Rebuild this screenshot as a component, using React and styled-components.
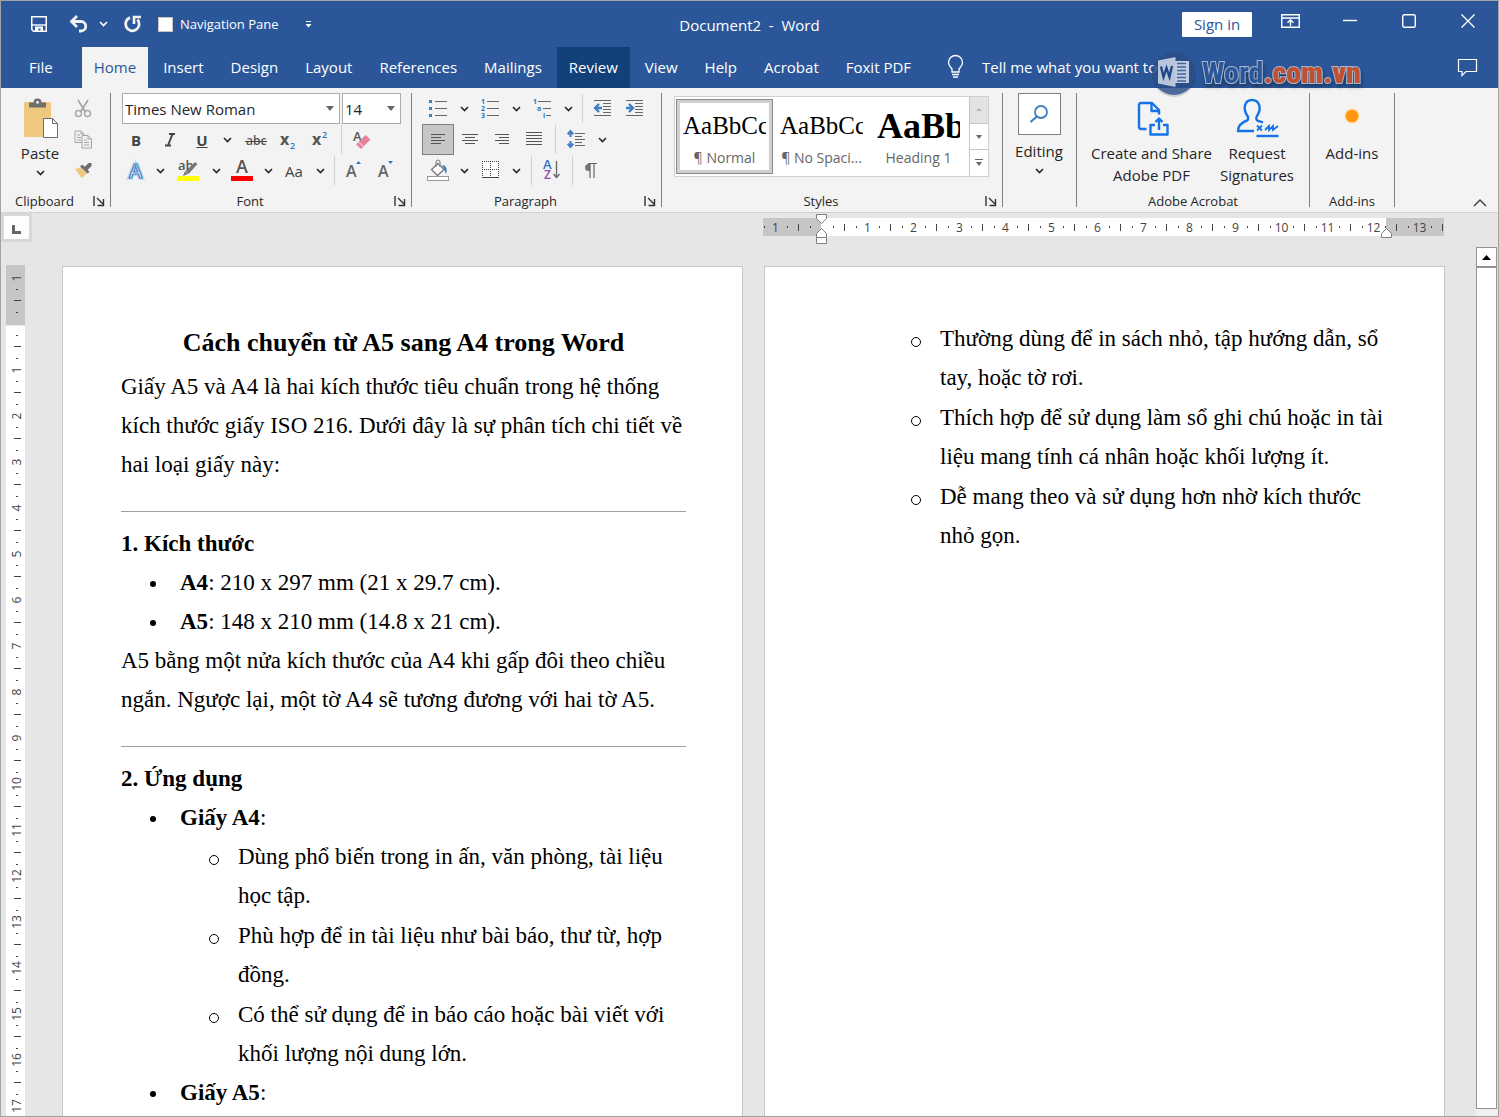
import React, { useState } from 'react';
import styled, { createGlobalStyle, css } from 'styled-components';

const GlobalStyle = createGlobalStyle`
  * {
    box-sizing: border-box;
  }

  body {
    margin: 0;
    background: #e6e6e6;
    color: #262626;
    font-family: 'Open Sans', 'Noto Sans', sans-serif;
    font-size: 15px;
  }

  button, input, select {
    margin: 0;
    padding: 0;
    border: 0;
    border-radius: 0;
    background: transparent;
    color: inherit;
    font: inherit;
  }

  svg {
    display: block;
    flex: none;
    overflow: visible;
  }
`;

/* ---------- window ---------- */

const Window = styled.div`
  position: relative;
  display: flex;
  flex-direction: column;
  height: 100vh;
  overflow: hidden;
  border: 1px solid #a3a3a3;
`;

const TitleBar = styled.header`
  display: grid;
  grid-template-columns: 1fr auto 1fr;
  align-items: center;
  height: 46px;
  background: #2b579a;
  color: #fff;
`;

const QuickAccess = styled.div`
  display: flex;
  align-items: center;
  gap: 10px;
  padding-left: 28px;
`;

const SplitButton = styled.div`
  display: flex;
`;

const BarButton = styled.button`
  display: flex;
  align-items: center;
  justify-content: center;
  width: ${props => props.$width || 20}px;
  height: 28px;
`;

const CheckLabel = styled.label`
  display: flex;
  align-items: center;
  gap: 7px;
  font-size: 13px;
  margin-right: 10px;
`;

const CheckBox = styled.input`
  appearance: none;
  width: 15px;
  height: 15px;
  border: 1px solid #c8c6c4;
  background: #fff;

  &:checked {
    box-shadow: inset 0 0 0 3px #fff;
    background: #2b579a;
  }
`;

const DocumentTitle = styled.h1`
  margin: 0;
  padding-top: 2px;
  font-size: 15px;
  font-weight: 400;
  white-space: pre;
`;

const WindowControls = styled.div`
  display: flex;
  align-items: center;
  justify-content: flex-end;
`;

const SignIn = styled.button`
  width: 70px;
  height: 25px;
  margin-right: 8px;
  border-radius: 1px;
  background: #fff;
  color: #2b579a;
`;

/* ---------- tabs ---------- */

const TabBar = styled.nav`
  display: flex;
  flex: none;
  align-items: stretch;
  gap: 3px;
  height: 41px;
  padding-left: 16px;
  background: #2b579a;
  color: #fff;
`;

const Tab = styled.button`
  padding: 0 12px 2px;
  white-space: nowrap;

  &:first-child {
    margin-right: 14px;
  }

  ${props =>
    props.$hovered &&
    css`
      background: #124078;
    `}

  ${props =>
    props.$active &&
    css`
      background: #f3f3f3;
      color: #2b579a;
    `}
`;

const TellMe = styled.label`
  display: flex;
  align-items: center;
  gap: 18px;
  margin-left: 21px;
  padding-bottom: 2px;
`;

const TellMeInput = styled.input`
  width: 204px;
  outline: none;

  &::placeholder {
    color: #fff;
    opacity: 1;
  }
`;

const CommentButton = styled(BarButton)`
  align-self: center;
  margin-left: auto;
  margin-right: 21px;
`;

/* ---------- watermark over the tab bar ---------- */

const Watermark = styled.div`
  position: absolute;
  top: 47px;
  right: 137px;
  display: flex;
  align-items: center;
  gap: 4px;
  pointer-events: none;
`;

const WatermarkText = styled.span`
  font-family: 'Liberation Sans Narrow', 'Roboto Condensed', 'Liberation Sans', sans-serif;
  font-size: 30px;
  font-weight: 700;
  line-height: 48px;
  color: #2b579a;
  -webkit-text-stroke: 2px #a9b8d2;
  paint-order: stroke fill;
  filter: drop-shadow(1px 3px 2px rgba(0, 0, 0, 0.35));

  b {
    color: #c0502f;
  }
`;

/* ---------- ribbon ---------- */

const Ribbon = styled.div`
  display: flex;
  flex: none;
  height: 125px;
  padding: 5px 0;
  border-bottom: 1px solid #d2d2d2;
  background: #f3f3f3;
`;

const Group = styled.section`
  display: flex;
  flex: none;
  flex-direction: column;
  width: ${props => props.$width}px;
  border-right: 1px solid #808080;
`;

const GroupBody = styled.div`
  display: flex;
  flex: 1;
  align-items: flex-start;
  padding-left: ${props => props.$indent || 0}px;
`;

const GroupFooter = styled.div`
  display: flex;
  align-items: center;
  height: 18px;
  margin-bottom: -3px;
  font-size: 13px;
`;

const GroupName = styled.span`
  flex: 1;
  text-align: center;
`;

const Launcher = styled.button`
  display: flex;
  justify-content: center;
  width: 22px;
`;

const Rows = styled.div`
  display: flex;
  flex-direction: column;
`;

const Row = styled.div`
  display: flex;
  align-items: center;
  height: 31px;
`;

const Tool = styled.button`
  display: flex;
  align-items: center;
  justify-content: center;
  width: ${props => props.$width || 32}px;
  height: 31px;
  color: #444;

  ${props =>
    props.$pressed &&
    css`
      border: 1px solid #808080;
      background: #c6c6c6;
    `}
`;

const Divider = styled.span`
  display: flex;
  justify-content: center;
  width: ${props => (props.$narrow ? 8 : 10)}px;

  &::before {
    content: '';
    width: 1px;
    height: 29px;
    background: #d0d0d0;
  }
`;

const BigButton = styled.button`
  display: flex;
  flex-direction: column;
  align-items: center;
  width: ${props => props.$width}px;
  padding-top: 5px;
  line-height: 22px;
`;

const EditingButton = styled(BigButton)`
  padding-top: 0;
`;

const BigIcon = styled.span`
  display: flex;
  align-items: center;
  justify-content: center;
  height: ${props => props.$height || 44}px;
  padding-bottom: ${props => props.$raise || 0}px;
`;

const EditingBox = styled.span`
  display: flex;
  align-items: center;
  justify-content: center;
  width: 43px;
  height: 42px;
  margin-bottom: 5px;
  border: 1px solid #808080;
  background: #fff;
`;

const SelectBox = styled.div`
  position: relative;
  width: ${props => props.$width}px;
  height: 31px;
  margin-right: 2px;
  border: 1px solid #ababab;
  background: #fff;

  svg {
    position: absolute;
    top: 12px;
    right: 5px;
    pointer-events: none;
  }
`;

const Select = styled.select`
  appearance: none;
  width: 100%;
  height: 100%;
  padding-left: 2px;
  outline: none;
`;

const Gallery = styled.div`
  display: flex;
  width: 315px;
  height: 81px;
  margin-top: 3px;
  border: 1px solid #d0d0d0;
  background: #fff;
`;

const StyleCard = styled.button`
  display: flex;
  flex-direction: column;
  width: 97px;
  height: 75px;
  margin: 2px 0 0 1px;
  padding: 9px 3px 0;
  border: 4px solid transparent;
  color: #666;
  font-size: 14px;
  line-height: 20px;

  & + & {
    margin-left: 0;
  }

  ${props =>
    props.$active &&
    css`
      border-color: #d0d0ce;
      outline: 1px solid #8a8a88;
      outline-offset: -1px;
    `}
`;

const Sample = styled.span`
  width: 100%;
  height: 36px;
  overflow: hidden;
  color: #000;
  font-family: 'Liberation Serif', 'Times New Roman', serif;
  font-size: ${props => (props.$heading ? 36 : 25)}px;
  font-weight: ${props => (props.$heading ? 700 : 400)};
  line-height: 28px;
  text-align: left;
  white-space: nowrap;
`;

const StyleName = styled.span`
  width: 100%;
  text-align: center;
  white-space: nowrap;
`;

const GalleryScroll = styled.div`
  display: flex;
  flex-direction: column;
  width: 19px;
  margin-left: auto;
  border-left: 1px solid #c6c6c6;

  button {
    display: flex;
    flex: 1;
    align-items: center;
    justify-content: center;
  }

  button + button {
    border-top: 1px solid #c6c6c6;
  }

  button:disabled {
    background: #e3e3e3;
  }
`;

const Collapse = styled.button`
  align-self: flex-end;
  margin: 0 11px 0 auto;
`;

/* ---------- work area ---------- */

const Workspace = styled.main`
  display: grid;
  flex: 1;
  grid-template-columns: 31px 1fr 23px;
  grid-template-rows: 52px 1fr;
  min-height: 0;
  background: #e6e6e6;
`;

const Corner = styled.button`
  display: flex;
  align-items: center;
  justify-content: center;
  width: 31px;
  height: 29px;
  border: 3px solid #d8d8d8;
  background: #fdfdfd;
`;

const RulerStrip = styled.div`
  display: flex;
  justify-content: center;
  padding-left: 700px;
`;

const Ruler = styled.div`
  position: relative;
  display: flex;
  flex: none;
  justify-content: space-between;
  width: 681px;
  height: 18px;
  margin-top: 5px;
  padding: 0 1px;
  background: linear-gradient(
    to right,
    #c6c6c6 58px,
    #fff 58px calc(100% - 58px),
    #c6c6c6 calc(100% - 58px)
  );
`;

const Mark = styled.span`
  display: flex;
  align-items: center;
  justify-content: center;
  width: 0;
  color: #444;
  font-size: 12px;
  white-space: nowrap;

  i {
    flex: none;
    width: ${props => (props.$side ? props.$size : 1)}px;
    height: ${props => (props.$side ? 1 : props.$size)}px;
    background: #444;
  }
`;

const Indent = styled.span`
  position: absolute;
  top: ${props => props.$top}px;
  left: ${props => props.$left};
`;

const VerticalRuler = styled.div`
  width: 19px;
  margin-left: 5px;
  padding-top: 7px;
  overflow: hidden;
  background: linear-gradient(to bottom, #c6c6c6 60px, #e6e6e6 60px 61px, #fff 61px);
`;

const Centimetre = styled.div`
  display: grid;
  grid-template-rows: repeat(4, minmax(0, 1fr));
  justify-items: center;
  height: 46px;
  padding-left: 3px;
`;

const SideMark = styled(Mark)`
  line-height: 0;

  span {
    transform: rotate(-90deg);
  }
`;

const Pages = styled.div`
  display: flex;
  justify-content: center;
  gap: 21px;
  padding-top: 1px;
  overflow: hidden;
`;

const Page = styled.article`
  flex: none;
  width: 681px;
  min-height: 965px;
  padding: 52px 56px 52px 58px;
  border: 1px solid #c6c6c6;
  background: #fff;
  color: #000;
  font-family: 'Liberation Serif', 'Times New Roman', serif;
  font-size: 23px;
  line-height: 39px;

  p {
    margin: 0;
  }
`;

const Heading = styled.h2`
  margin: 0;
  font-size: 26px;
  line-height: 48px;
  text-align: center;
`;

const SubHeading = styled.h3`
  margin: 0;
  font-size: 23px;
`;

const Rule = styled.hr`
  height: 1px;
  margin: 27px 0 12px;
  border: 0;
  background: #a0a0a0;
`;

const List = styled.ul`
  margin: 0;
  padding: 0 0 0 29px;
  list-style: none;
`;

const Item = styled.li`
  display: grid;
  grid-template-columns: 30px 1fr;

  &::before {
    content: '';
    width: 6px;
    height: 6px;
    margin-top: 18px;
    border-radius: 50%;
    background: #000;
  }
`;

const SubItem = styled(Item)`
  grid-template-columns: 29px 1fr;

  & + & {
    margin-top: 1px;
  }

  &::before {
    width: 8px;
    height: 8px;
    border: 1px solid #000;
    background: none;
  }
`;

const SecondPageList = styled(List)`
  margin-left: 59px;
`;

const ScrollBar = styled.div`
  display: flex;
  grid-column: 3;
  grid-row: 1 / 3;
  flex-direction: column;
  margin: 34px 1px 0;
  background: #f0f0f0;
`;

const ScrollButton = styled.button`
  display: flex;
  align-items: center;
  justify-content: center;
  height: 20px;
  border: 1px solid #939393;
  background: #fff;
`;

const Thumb = styled.div`
  flex: 1;
  margin-bottom: 7px;
  border: 1px solid #939393;
  background: #fff;
`;

/* ---------- icons ---------- */

const Svg = ({ w, h, children, ...rest }) => (
  <svg width={w} height={h} viewBox={`0 0 ${w} ${h}`} fill="none" aria-hidden="true" {...rest}>
    {children}
  </svg>
);

const ChevronIcon = ({ color = '#262626' }) => (
  <Svg w={9} h={6}>
    <path d="M1 1l3.5 3.5L8 1" stroke={color} strokeWidth="1.6" />
  </Svg>
);

const TriangleIcon = ({ up, color = '#666', w = 7, h = 4 }) => (
  <Svg w={w} h={h}>
    <path d={up ? `M0 ${h}h${w}L${w / 2} 0z` : `M0 0h${w}L${w / 2} ${h}z`} fill={color} />
  </Svg>
);

const LauncherIcon = () => (
  <Svg w={12} h={11}>
    <path d="M1 0v10M4 2l6 6M10.5 3v6.500h-6" stroke="#333" strokeWidth="1.4" />
  </Svg>
);

const SaveIcon = () => (
  <Svg w={16} h={16}>
    <path d="M.75.75h14.5v14.5H2.500L.75 13.500z" stroke="#fff" strokeWidth="1.5" />
    <path d="M1 9h14" stroke="#fff" strokeWidth="1.4" />
    <path d="M4 10.500h8v5H9.500v-3H7.500v3H4z" fill="#fff" />
  </Svg>
);

const UndoIcon = () => (
  <Svg w={20} h={18}>
    <path d="M3 6.500h9a4.700 4.700 0 0 1 0 9.500h-2" stroke="#f3f3f3" strokeWidth="2.8" />
    <path d="M8 1L2.500 6.500L8 12" stroke="#f3f3f3" strokeWidth="2.8" />
  </Svg>
);

const RedoIcon = () => (
  <Svg w={18} h={18}>
    <path d="M6 2.600A6.800 6.800 0 1 0 13.500 4.500" stroke="#f3f3f3" strokeWidth="2.8" />
    <path d="M10 9V2h7" stroke="#f3f3f3" strokeWidth="2.6" />
  </Svg>
);

const CustomizeIcon = () => (
  <Svg w={7} h={7}>
    <path d="M1 .5h5" stroke="#fff" />
    <path d="M.5 3h6l-3 3.500z" fill="#fff" />
  </Svg>
);

const RibbonDisplayIcon = () => (
  <Svg w={19} h={20}>
    <path d="M.75.75h17.500v12.500H.75zM1 4h17" stroke="#fff" strokeWidth="1.4" />
    <path d="M9.500 12V6M6.500 8.800l3-3 3 3" stroke="#fff" strokeWidth="1.4" />
  </Svg>
);

const MinimizeIcon = () => (
  <Svg w={14} h={14}>
    <path d="M0 3.500h14" stroke="#fff" strokeWidth="1.4" />
  </Svg>
);

const MaximizeIcon = () => (
  <Svg w={14} h={20}>
    <rect x=".75" y=".75" width="12.500" height="12.500" rx="1.500" stroke="#fff" strokeWidth="1.4" />
  </Svg>
);

const CloseIcon = () => (
  <Svg w={14} h={20}>
    <path d="M.5.5l13 13M13.500.5l-13 13" stroke="#fff" strokeWidth="1.4" />
  </Svg>
);

const BulbIcon = () => (
  <Svg w={17} h={24}>
    <path
      d="M5 17v-3C3.500 12 1.500 10.500 1.500 7.500a7 7 0 0 1 14 0c0 3-2 4.500-3.500 6.500v3zM5 19.500h7M6 22h5"
      stroke="#fff"
      strokeWidth="1.3"
    />
  </Svg>
);

const CommentIcon = () => (
  <Svg w={19} h={17}>
    <path d="M.5.5h18v12H8l-4 4v-4H.5z" stroke="#fff" strokeWidth="1.2" />
  </Svg>
);

const WatermarkIcon = () => (
  <Svg w={48} h={50}>
    <ellipse cx="24" cy="27" rx="22" ry="22" fill="#000" opacity=".14" />
    <circle cx="24" cy="25" r="22" fill="#2b4f8c" opacity=".8" />
    <path d="M25 13h14v22H25z" fill="#dbe2ee" opacity=".85" />
    <path d="M27 15.500h9M27 19h9M27 22.500h9M27 26h9M27 29.500h9M27 33h9" stroke="#41639e" strokeWidth="1.5" />
    <path d="M8 12.500L25.500 9v30L8 35.500z" fill="#b9c5da" />
    <path d="M11 18.500l2.500 10.500 3-9 3 9 2.500-11" stroke="#1f4485" strokeWidth="2.3" />
  </Svg>
);

const PasteIcon = () => (
  <Svg w={32} h={40}>
    <rect x="0" y="3" width="27" height="35" rx="1" fill="#edc87e" />
    <path d="M5 3.500h4.500a4 4 0 0 1 8 0H22v5H5z" fill="#6e6e6e" />
    <circle cx="13.500" cy="3.300" r="1.400" fill="#f3f3f3" />
    <path d="M19.500 19.500h9l5 5V38.500h-14z" fill="#fff" stroke="#6e6e6e" />
    <path d="M28.500 19.500v5h5" stroke="#6e6e6e" />
  </Svg>
);

const CutIcon = () => (
  <Svg w={18} h={19}>
    <path d="M4 1l7.500 12M14 1L6.500 13" stroke="#a6a6a6" strokeWidth="1.8" />
    <circle cx="4.500" cy="14.500" r="3" stroke="#a6a6a6" strokeWidth="1.4" />
    <circle cx="13.500" cy="14.500" r="3" stroke="#a6a6a6" strokeWidth="1.4" />
  </Svg>
);

const CopyIcon = () => (
  <Svg w={18} h={19}>
    <path d="M1 1h6l3 3v8.500H1zM7 1v3h3M3 5h3M3 7.500h4M3 10h4" stroke="#a6a6a6" />
    <path d="M8 5.500h6l3.500 3.500v9H8z" fill="#f3f3f3" stroke="#a6a6a6" />
    <path d="M14 5.500V9h3.500M10 10h3M10 12.500h5.500M10 15h5.500" stroke="#a6a6a6" />
  </Svg>
);

const PainterIcon = () => (
  <Svg w={18} h={17}>
    <path d="M1 7l5.500-1.500 6.500 6L7.500 16z" fill="#edc87e" />
    <path d="M6 4.500l2.500-2 7 7.500-2 1.500z" fill="#6e6e6e" />
    <path d="M9.500 6L14.500 1h3v3L12.500 9z" fill="#6e6e6e" />
  </Svg>
);

const iconText = {
  fontFamily: "'Open Sans', sans-serif",
  fontWeight: 600
};

const SubscriptIcon = ({ sup }) => (
  <Svg w={18} h={20}>
    <text x="1" y="15" fontSize="16" fill="#555" {...iconText} fontWeight="700">x</text>
    <text x="11" y={sup ? 8 : 19} fontSize="9" fill="#2e75c0" {...iconText}>2</text>
  </Svg>
);

const EraserIcon = () => (
  <Svg w={20} h={20}>
    <text x="1" y="11" fontSize="13" fill="#555" {...iconText}>A</text>
    <path d="M4 14.500L13.500 5l5 4.500L9 19z" fill="#e8829a" />
    <path d="M6.500 12l5 4.500" stroke="#f3f3f3" />
  </Svg>
);

const EffectsIcon = () => (
  <Svg w={20} h={22}>
    <text
      x="3" y="18" fontSize="20" fill="#fff" stroke="#9cc3ec" strokeWidth="4" opacity=".5" {...iconText}
    >A</text>
    <text x="3" y="18" fontSize="20" fill="#fff" stroke="#3f7ec4" strokeWidth="1.2" {...iconText}>A</text>
  </Svg>
);

const HighlightIcon = () => (
  <Svg w={24} h={24}>
    <text x="2" y="11" fontSize="13" fill="#555" {...iconText}>ab</text>
    <path d="M19 3l2.500 2-9 10-3-3z" fill="#777" />
    <path d="M9 12l3 3-5 2z" fill="#777" />
    <path d="M1 17h22v5H1z" fill="#ff0" />
  </Svg>
);

const FontColorIcon = () => (
  <Svg w={24} h={24}>
    <text x="6" y="14" fontSize="18" fill="#555" {...iconText}>A</text>
    <path d="M1 17h22v5H1z" fill="#f00" />
  </Svg>
);

const SizeIcon = ({ up }) => (
  <Svg w={18} h={20}>
    <text x="1" y="16" fontSize="16" fill="#666" {...iconText}>A</text>
    <path d={up ? 'M11 3h5l-2.500-3z' : 'M11 0h5l-2.500 3z'} fill="#2e75c0" />
  </Svg>
);

const BulletsIcon = () => (
  <Svg w={20} h={18}>
    <path d="M7 1.500h12M7 8.500h12M7 15.500h12" stroke="#666" />
    <path d="M1 0h3v3H1zM1 7h3v3H1zM1 14h3v3H1z" fill="#3f7ebf" />
  </Svg>
);

const NumberingIcon = () => (
  <Svg w={20} h={20}>
    <path d="M7 2.500h12M7 9.500h12M7 16.500h12" stroke="#666" />
    <g fontSize="7" fill="#2e75c0" {...iconText} fontWeight="700">
      <text x="1" y="5">1</text>
      <text x="1" y="12">2</text>
      <text x="1" y="19">3</text>
    </g>
  </Svg>
);

const MultilevelIcon = () => (
  <Svg w={20} h={20}>
    <path d="M6 2.500h13M11 9.500h8M14 16.500h5" stroke="#666" />
    <g fontSize="7" fill="#2e75c0" {...iconText} fontWeight="700">
      <text x="1" y="5">1</text>
      <text x="5" y="12">a</text>
      <text x="11" y="19">i</text>
    </g>
  </Svg>
);

const IndentIcon = ({ increase }) => (
  <Svg w={19} h={17}>
    <path d="M1 .5h17M10 3.500h8M10 6.500h8M10 9.500h8M10 12.500h8M1 15.500h17" stroke="#666" />
    <path
      d={increase ? 'M1 8h6M4 4L8 8 4 12' : 'M9 8H3M6 4L2 8l4 4'}
      stroke="#3f7ebf"
      strokeWidth="2.4"
    />
  </Svg>
);

const alignPaths = {
  left: 'M1 .5h14M1 3.500h10M1 6.500h14M1 9.500h10',
  center: 'M0 .5h16M3 3.500h10M0 6.500h16M3 9.500h10',
  right: 'M1 .5h14M5 3.500h10M1 6.500h14M5 9.500h10',
  justify: 'M0 .5h16M0 3.500h16M0 6.500h16M0 9.500h16M0 12.500h16'
};

const AlignIcon = ({ kind }) => (
  <Svg w={16} h={kind === 'justify' ? 15 : 11}>
    <path d={alignPaths[kind]} stroke="#555" />
  </Svg>
);

const LineSpacingIcon = () => (
  <Svg w={18} h={21}>
    <path d="M8 4.500h10M8 7.500h7M8 10.500h10M8 13.500h7M8 16.500h10" stroke="#666" />
    <path d="M3.500 2v6M3.500 12v6M.7 5.200l2.800-3 2.800 3M.7 14.800l2.800 3 2.800-3" stroke="#4a80c8" strokeWidth="2.2" />
  </Svg>
);

const ShadingIcon = () => (
  <Svg w={23} h={23}>
    <path d="M11 4.500l6 6-6.500 6-6-6z" fill="#fff" stroke="#777" strokeWidth="1.3" />
    <path d="M9 8V3a2 2 0 0 1 4 0v5" stroke="#777" />
    <path d="M15 6c4 0 6 4 4 9l-2-5z" fill="#3f7ebf" />
    <rect x=".5" y="17.500" width="21" height="4" fill="#fff" stroke="#999" />
  </Svg>
);

const BordersIcon = () => (
  <Svg w={17} h={19}>
    <rect width="17" height="17" fill="#fff" />
    <path d="M0 .5h17M.5 0v17M16.500 0v17M8.500 0v17M0 8.500h17" stroke="#444" strokeDasharray="1 1" />
    <path d="M0 16.500h17" stroke="#444" />
  </Svg>
);

const SortIcon = () => (
  <Svg w={18} h={22}>
    <text x="0" y="9" fontSize="13" fill="#2e75c0" {...iconText}>A</text>
    <text x="1" y="19" fontSize="12" fill="#8e4fb0" {...iconText}>Z</text>
    <path d="M13.500 1v16M10.500 14l3 3.500 3-3.500" stroke="#666" strokeWidth="1.3" />
  </Svg>
);

const PilcrowIcon = () => (
  <Svg w={14} h={16}>
    <path d="M5 1H3.500a3.500 3.500 0 0 0 0 7H5z" fill="#777" />
    <path d="M3 .5h9M5 1v14M9 1v14" stroke="#666" strokeWidth="1.2" />
  </Svg>
);

const SearchIcon = () => (
  <Svg w={20} h={20}>
    <circle cx="12" cy="8" r="6" stroke="#3f7ebf" strokeWidth="1.8" />
    <path d="M8 12.500L1.500 18" stroke="#3f7ebf" strokeWidth="2.2" />
  </Svg>
);

const SharePdfIcon = () => (
  <Svg w={30} h={36}>
    <g stroke="#1473e6" strokeWidth="2.4" strokeLinejoin="round">
      <path d="M9.500 28H4a2 2 0 0 1-2-2V4a2 2 0 0 1 2-2h11l7 7v4.500" />
      <path d="M14.500 2v8H22" />
      <path d="M18 24h-4.500v9.500h17V24H26" />
      <path d="M22 29V18M18.500 21l3.500-3.500 3.500 3.500" />
    </g>
  </Svg>
);

const SignatureIcon = () => (
  <Svg w={42} h={40}>
    <g stroke="#1473e6" strokeWidth="2.4">
      <path d="M18 33H2c0-6 3.500-8.500 9-10.500 1.500-.6 1.500-3 .5-4.500C6.500 10.500 8.500 2 16 2s10 8.500 5 16c-1.200 2-1 4 1 4.800l5 1.500" />
      <path d="M20.500 38h22" />
    </g>
    <path d="M21 27.500l5 5M26 27.500l-5 5" stroke="#1473e6" strokeWidth="1.8" />
    <path d="M29 32l4-4v4l4-4v4l5-4" stroke="#1473e6" strokeWidth="1.8" />
  </Svg>
);

const AddInsIcon = () => (
  <Svg w={16} h={16}>
    <circle cx="8" cy="8" r="7.500" fill="#ffd9a0" />
    <circle cx="8" cy="8" r="6.300" fill="#ff9810" />
  </Svg>
);

const CollapseIcon = () => (
  <Svg w={14} h={9}>
    <path d="M1 8l6-6 6 6" stroke="#444" strokeWidth="1.5" />
  </Svg>
);

const FirstLineMarker = () => (
  <Svg w={11} h={10}>
    <path d="M.5.5h10v4l-5 5-5-5z" fill="#fff" stroke="#808080" />
  </Svg>
);

const HangingMarker = ({ box }) => (
  <Svg w={11} h={box ? 16 : 10}>
    <path d="M.5 9.500h10v-4l-5-5-5 5z" fill="#fff" stroke="#808080" />
    {box && <path d="M.5 9.500h10v6H.5z" fill="#fff" stroke="#808080" />}
  </Svg>
);

/* ---------- parts ---------- */

const tabs = [
  'File', 'Home', 'Insert', 'Design', 'Layout', 'References',
  'Mailings', 'Review', 'View', 'Help', 'Acrobat', 'Foxit PDF'
];

const Chevron = ({ label, wide }) => (
  <Tool $width={wide ? 26 : 20} aria-label={`${label} options`}>
    <ChevronIcon />
  </Tool>
);

const RibbonGroup = ({ name, width, indent, launcher, children }) => (
  <Group $width={width} aria-label={name}>
    <GroupBody $indent={indent}>{children}</GroupBody>
    <GroupFooter>
      <GroupName>{name}</GroupName>
      {launcher && (
        <Launcher aria-label={`${name} settings`}>
          <LauncherIcon />
        </Launcher>
      )}
    </GroupFooter>
  </Group>
);

// one step is a quarter of a centimetre
const markAt = step => {
  const value = Math.abs(step);
  if (value === 0) return null;
  if (value % 4 === 0) return <span>{value / 4}</span>;
  return <i />;
};

const markSize = step => (step % 2 === 0 ? 7 : 2);

const HorizontalRuler = () => (
  <Ruler>
    {Array.from({ length: 60 }, (_, i) => i - 5).map(step => (
      <Mark key={step} $size={markSize(step)}>
        {markAt(step)}
      </Mark>
    ))}
    <Indent $top={-4} $left="53px">
      <FirstLineMarker />
    </Indent>
    <Indent $top={10} $left="53px">
      <HangingMarker box />
    </Indent>
    <Indent $top={10} $left="618px">
      <HangingMarker />
    </Indent>
  </Ruler>
);

const SideRuler = () => (
  <VerticalRuler>
    {Array.from({ length: 24 }, (_, i) => i - 1).map(cm => (
      <Centimetre key={cm}>
        {[0, 1, 2, 3].map(quarter => {
          const step = cm * 4 + quarter;
          return (
            <SideMark key={quarter} $side $size={markSize(step)}>
              {markAt(step)}
            </SideMark>
          );
        })}
      </Centimetre>
    ))}
  </VerticalRuler>
);

const FontGroup = () => {
  const [font, setFont] = useState('Times New Roman');
  const [size, setSize] = useState('14');

  return (
    <RibbonGroup name="Font" width={301} indent={11} launcher>
      <Rows>
        <Row>
          <SelectBox $width={218}>
            <Select aria-label="Font" value={font} onChange={e => setFont(e.target.value)}>
              <option>Times New Roman</option>
              <option>Arial</option>
            </Select>
            <TriangleIcon w={8} h={5} />
          </SelectBox>
          <SelectBox $width={59}>
            <Select aria-label="Font size" value={size} onChange={e => setSize(e.target.value)}>
              <option>14</option>
              <option>16</option>
            </Select>
            <TriangleIcon w={8} h={5} />
          </SelectBox>
        </Row>
        <Row>
          <Tool $width={28} aria-label="Bold"><b>B</b></Tool>
          <Tool $width={40} aria-label="Italic">
            <Svg w={12} h={14}>
              <path d="M5 1h6M1 12.500h6M8.500 1L4 12.500" stroke="#444" strokeWidth="2" />
            </Svg>
          </Tool>
          <Tool $width={24} aria-label="Underline"><b><u>U</u></b></Tool>
          <Chevron label="Underline" wide />
          <Tool aria-label="Strikethrough">
            <Svg w={22} h={16}>
              <text x="1" y="13" fontSize="12" fill="#555" {...iconText}>abc</text>
              <path d="M0 9.500h22" stroke="#444" />
            </Svg>
          </Tool>
          <Tool aria-label="Subscript"><SubscriptIcon /></Tool>
          <Tool aria-label="Superscript"><SubscriptIcon sup /></Tool>
          <Divider />
          <Tool aria-label="Clear formatting"><EraserIcon /></Tool>
        </Row>
        <Row>
          <Tool $width={28} aria-label="Text effects"><EffectsIcon /></Tool>
          <Chevron label="Text effects" />
          <Tool $width={36} aria-label="Highlight colour"><HighlightIcon /></Tool>
          <Chevron label="Highlight colour" />
          <Tool aria-label="Font colour"><FontColorIcon /></Tool>
          <Chevron label="Font colour" />
          <Tool aria-label="Change case">Aa</Tool>
          <Chevron label="Change case" />
          <Divider $narrow />
          <Tool aria-label="Increase font size"><SizeIcon up /></Tool>
          <Tool aria-label="Decrease font size"><SizeIcon /></Tool>
        </Row>
      </Rows>
    </RibbonGroup>
  );
};

const ParagraphGroup = () => (
  <RibbonGroup name="Paragraph" width={250} indent={10} launcher>
    <Rows>
      <Row>
        <Tool aria-label="Bullets"><BulletsIcon /></Tool>
        <Chevron label="Bullets" />
        <Tool aria-label="Numbering"><NumberingIcon /></Tool>
        <Chevron label="Numbering" />
        <Tool aria-label="Multilevel list"><MultilevelIcon /></Tool>
        <Chevron label="Multilevel list" />
        <Divider $narrow />
        <Tool aria-label="Decrease indent"><IndentIcon /></Tool>
        <Tool aria-label="Increase indent"><IndentIcon increase /></Tool>
      </Row>
      <Row>
        <Tool aria-label="Align left" $pressed><AlignIcon kind="left" /></Tool>
        <Tool aria-label="Centre"><AlignIcon kind="center" /></Tool>
        <Tool aria-label="Align right"><AlignIcon kind="right" /></Tool>
        <Tool aria-label="Justify"><AlignIcon kind="justify" /></Tool>
        <Divider />
        <Tool aria-label="Line spacing"><LineSpacingIcon /></Tool>
        <Chevron label="Line spacing" />
      </Row>
      <Row>
        <Tool aria-label="Shading"><ShadingIcon /></Tool>
        <Chevron label="Shading" />
        <Tool aria-label="Borders"><BordersIcon /></Tool>
        <Chevron label="Borders" />
        <Divider />
        <Tool aria-label="Sort"><SortIcon /></Tool>
        <Divider $narrow />
        <Tool aria-label="Show marks"><PilcrowIcon /></Tool>
      </Row>
    </Rows>
  </RibbonGroup>
);

const StylesGroup = () => (
  <RibbonGroup name="Styles" width={341} indent={12} launcher>
    <Gallery>
      <StyleCard $active>
        <Sample>AaBbCc</Sample>
        <StyleName>¶ Normal</StyleName>
      </StyleCard>
      <StyleCard>
        <Sample>AaBbCc</Sample>
        <StyleName>¶ No Spaci...</StyleName>
      </StyleCard>
      <StyleCard>
        <Sample $heading>AaBb</Sample>
        <StyleName>Heading 1</StyleName>
      </StyleCard>
      <GalleryScroll>
        <button aria-label="Previous styles" disabled><TriangleIcon up color="#b5b5b5" w={6} h={3} /></button>
        <button aria-label="Next styles"><TriangleIcon w={6} h={4} /></button>
        <button aria-label="More styles">
          <Svg w={8} h={8}>
            <path d="M0 .5h8" stroke="#666" />
            <path d="M1 3h6L4 7z" fill="#666" />
          </Svg>
        </button>
      </GalleryScroll>
    </Gallery>
  </RibbonGroup>
);

const App = () => {
  const [activeTab, setActiveTab] = useState('Home');

  return (
    <>
      <GlobalStyle />
      <Window>
        <TitleBar>
          <QuickAccess>
            <BarButton aria-label="Save"><SaveIcon /></BarButton>
            <SplitButton>
              <BarButton aria-label="Undo" $width={40}><UndoIcon /></BarButton>
              <BarButton aria-label="Undo history" $width={9}><ChevronIcon color="#fff" /></BarButton>
            </SplitButton>
            <BarButton aria-label="Redo" $width={30}><RedoIcon /></BarButton>
            <CheckLabel>
              <CheckBox type="checkbox" />
              Navigation Pane
            </CheckLabel>
            <BarButton aria-label="Customize toolbar"><CustomizeIcon /></BarButton>
          </QuickAccess>
          <DocumentTitle>{'Document2  -  Word'}</DocumentTitle>
          <WindowControls>
            <SignIn>Sign in</SignIn>
            <BarButton aria-label="Ribbon display" $width={60}><RibbonDisplayIcon /></BarButton>
            <BarButton aria-label="Minimize" $width={59}><MinimizeIcon /></BarButton>
            <BarButton aria-label="Maximize" $width={59}><MaximizeIcon /></BarButton>
            <BarButton aria-label="Close" $width={60}><CloseIcon /></BarButton>
          </WindowControls>
        </TitleBar>

        <TabBar>
          {tabs.map(tab => (
            <Tab
              key={tab}
              $active={tab === activeTab}
              $hovered={tab === 'Review'}
              onClick={() => setActiveTab(tab)}
            >
              {tab}
            </Tab>
          ))}
          <TellMe>
            <BulbIcon />
            <TellMeInput aria-label="Tell me" placeholder="Tell me what you want to do" />
          </TellMe>
          <CommentButton aria-label="Comments"><CommentIcon /></CommentButton>
        </TabBar>

        <Ribbon>
          <RibbonGroup name="Clipboard" width={110} indent={7} launcher>
            <BigButton $width={64}>
              <BigIcon $raise={2}><PasteIcon /></BigIcon>
              Paste
              <BigIcon $height={18}><ChevronIcon /></BigIcon>
            </BigButton>
            <Rows>
              <Tool $width={22} aria-label="Cut"><CutIcon /></Tool>
              <Tool $width={22} aria-label="Copy"><CopyIcon /></Tool>
              <Tool $width={22} aria-label="Format painter"><PainterIcon /></Tool>
            </Rows>
          </RibbonGroup>
          <FontGroup />
          <ParagraphGroup />
          <StylesGroup />
          <RibbonGroup name="" width={74}>
            <EditingButton $width={72}>
              <EditingBox><SearchIcon /></EditingBox>
              Editing
              <BigIcon $height={18}><ChevronIcon /></BigIcon>
            </EditingButton>
          </RibbonGroup>
          <RibbonGroup name="Adobe Acrobat" width={233} indent={10}>
            <BigButton $width={129}>
              <BigIcon $raise={2}><SharePdfIcon /></BigIcon>
              Create and Share Adobe PDF
            </BigButton>
            <BigButton $width={82}>
              <BigIcon $raise={4}><SignatureIcon /></BigIcon>
              Request Signatures
            </BigButton>
          </RibbonGroup>
          <RibbonGroup name="Add-ins" width={85}>
            <BigButton $width={84}>
              <BigIcon $raise={8}><AddInsIcon /></BigIcon>
              Add-ins
            </BigButton>
          </RibbonGroup>
          <Collapse aria-label="Collapse the ribbon"><CollapseIcon /></Collapse>
        </Ribbon>

        <Workspace>
          <Corner aria-label="Tab stop">
            <Svg w={9} h={5}>
              <path d="M1.500 0v7.500H9" stroke="#666" strokeWidth="3" />
            </Svg>
          </Corner>
          <RulerStrip>
            <HorizontalRuler />
          </RulerStrip>
          <ScrollBar>
            <ScrollButton aria-label="Scroll up"><TriangleIcon up color="#000" w={9} h={5} /></ScrollButton>
            <Thumb />
          </ScrollBar>
          <SideRuler />
          <Pages lang="vi">
            <Page>
              <Heading>Cách chuyển từ A5 sang A4 trong Word</Heading>
              <p>
                Giấy A5 và A4 là hai kích thước tiêu chuẩn trong hệ thống kích thước giấy ISO 216.
                Dưới đây là sự phân tích chi tiết về hai loại giấy này:
              </p>
              <Rule />
              <SubHeading>1. Kích thước</SubHeading>
              <List>
                <Item><div><b>A4</b>: 210 x 297 mm (21 x 29.7 cm).</div></Item>
                <Item><div><b>A5</b>: 148 x 210 mm (14.8 x 21 cm).</div></Item>
              </List>
              <p>
                A5 bằng một nửa kích thước của A4 khi gấp đôi theo chiều ngắn. Ngược lại, một tờ A4
                sẽ tương đương với hai tờ A5.
              </p>
              <Rule />
              <SubHeading>2. Ứng dụng</SubHeading>
              <List>
                <Item>
                  <div>
                    <b>Giấy A4</b>:
                    <List>
                      <SubItem>Dùng phổ biến trong in ấn, văn phòng, tài liệu học tập.</SubItem>
                      <SubItem>Phù hợp để in tài liệu như bài báo, thư từ, hợp đồng.</SubItem>
                      <SubItem>Có thể sử dụng để in báo cáo hoặc bài viết với khối lượng nội dung lớn.</SubItem>
                    </List>
                  </div>
                </Item>
                <Item><div><b>Giấy A5</b>:</div></Item>
              </List>
            </Page>
            <Page>
              <SecondPageList>
                <SubItem>Thường dùng để in sách nhỏ, tập hướng dẫn, sổ tay, hoặc tờ rơi.</SubItem>
                <SubItem>Thích hợp để sử dụng làm sổ ghi chú hoặc in tài liệu mang tính cá nhân hoặc khối lượng ít.</SubItem>
                <SubItem>Dễ mang theo và sử dụng hơn nhờ kích thước nhỏ gọn.</SubItem>
              </SecondPageList>
            </Page>
          </Pages>
        </Workspace>

        <Watermark>
          <WatermarkIcon />
          <WatermarkText>Word<b>.com.vn</b></WatermarkText>
        </Watermark>
      </Window>
    </>
  );
};

export default App;
